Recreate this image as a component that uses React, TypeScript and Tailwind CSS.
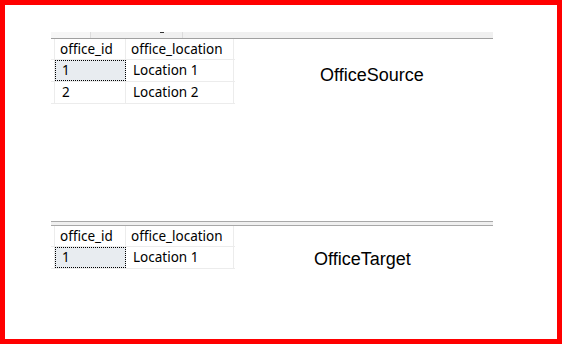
import type { ReactNode } from 'react';

type Row = { id: number; location: string };

const SOURCE: Row[] = [
  { id: 1, location: 'Location 1' },
  { id: 2, location: 'Location 2' },
];

const TARGET: Row[] = [{ id: 1, location: 'Location 1' }];

/** Results grid as drawn by the query tool: a thin row-header column, then two data columns. */
function ResultGrid({ rows }: { rows: Row[] }) {
  return (
    <div className="w-[184px] font-['Noto_Sans',sans-serif] text-[13.5px] leading-none text-black">
      <div className="flex h-[21px] border-b border-[#ececec]">
        <div className="w-[4px] border-r border-[#ececec]" />
        <div className="flex w-[71px] items-center border-r border-[#ececec] pl-[5px] pt-[1px]">office_id</div>
        <div className="flex w-[108px] items-center border-r border-[#ececec] pl-[5px] pt-[1px]">office_location</div>
      </div>
      {rows.map((r, i) => (
        <div key={r.id} className="flex h-[22px] border-b border-[#ececec]">
          <div className="w-[4px] border-r border-[#ececec]" />
          <div
            className={
              i === 0
                ? 'flex w-[71px] items-center border border-dotted border-black bg-[#e8ecf0] pl-[6px] pt-[1px]'
                : 'flex w-[71px] items-center border-r border-[#ececec] pl-[7px] pt-[1px]'
            }
          >
            {r.id}
          </div>
          <div className="flex w-[108px] items-center border-r border-[#ececec] pl-[7px] pt-[1px]">{r.location}</div>
        </div>
      ))}
    </div>
  );
}

function Caption({ children }: { children: ReactNode }) {
  return <div className="font-['Liberation_Sans',Arial,sans-serif] text-[18px] leading-none text-black">{children}</div>;
}

export default function App() {
  return (
    <div className="box-border h-[344px] w-[562px] border-[5px] border-[#ff0000] bg-white pl-[46px] pt-[27px]">
      {/* first result pane, scrolled so only the tab strip's edge shows */}
      <div className="h-[189px] w-[442px]">
        <div className="relative flex h-[6px] bg-[#f0f0f0]">
          <div className="w-[39px] bg-[#f6f6f6]" />
          <div className="w-[93px] border-x border-[#dcdcdc] bg-[#f0f0f0]" />
          <span className="absolute left-[109px] top-0 h-[1px] w-[4px] bg-[#333]" />
        </div>
        <div className="h-[1px] bg-[#a0a0a0]" />
        <div className="flex">
          <ResultGrid rows={SOURCE} />
          <div className="ml-[85px] mt-[27px]">
            <Caption>OfficeSource</Caption>
          </div>
        </div>
      </div>

      {/* second result pane */}
      <div className="w-[442px]">
        <div className="h-[5px] border-y border-[#a8a8a8] bg-[#f0f0f0]" />
        <div className="flex">
          <ResultGrid rows={TARGET} />
          <div className="ml-[79px] mt-[24px]">
            <Caption>OfficeTarget</Caption>
          </div>
        </div>
      </div>
    </div>
  );
}
